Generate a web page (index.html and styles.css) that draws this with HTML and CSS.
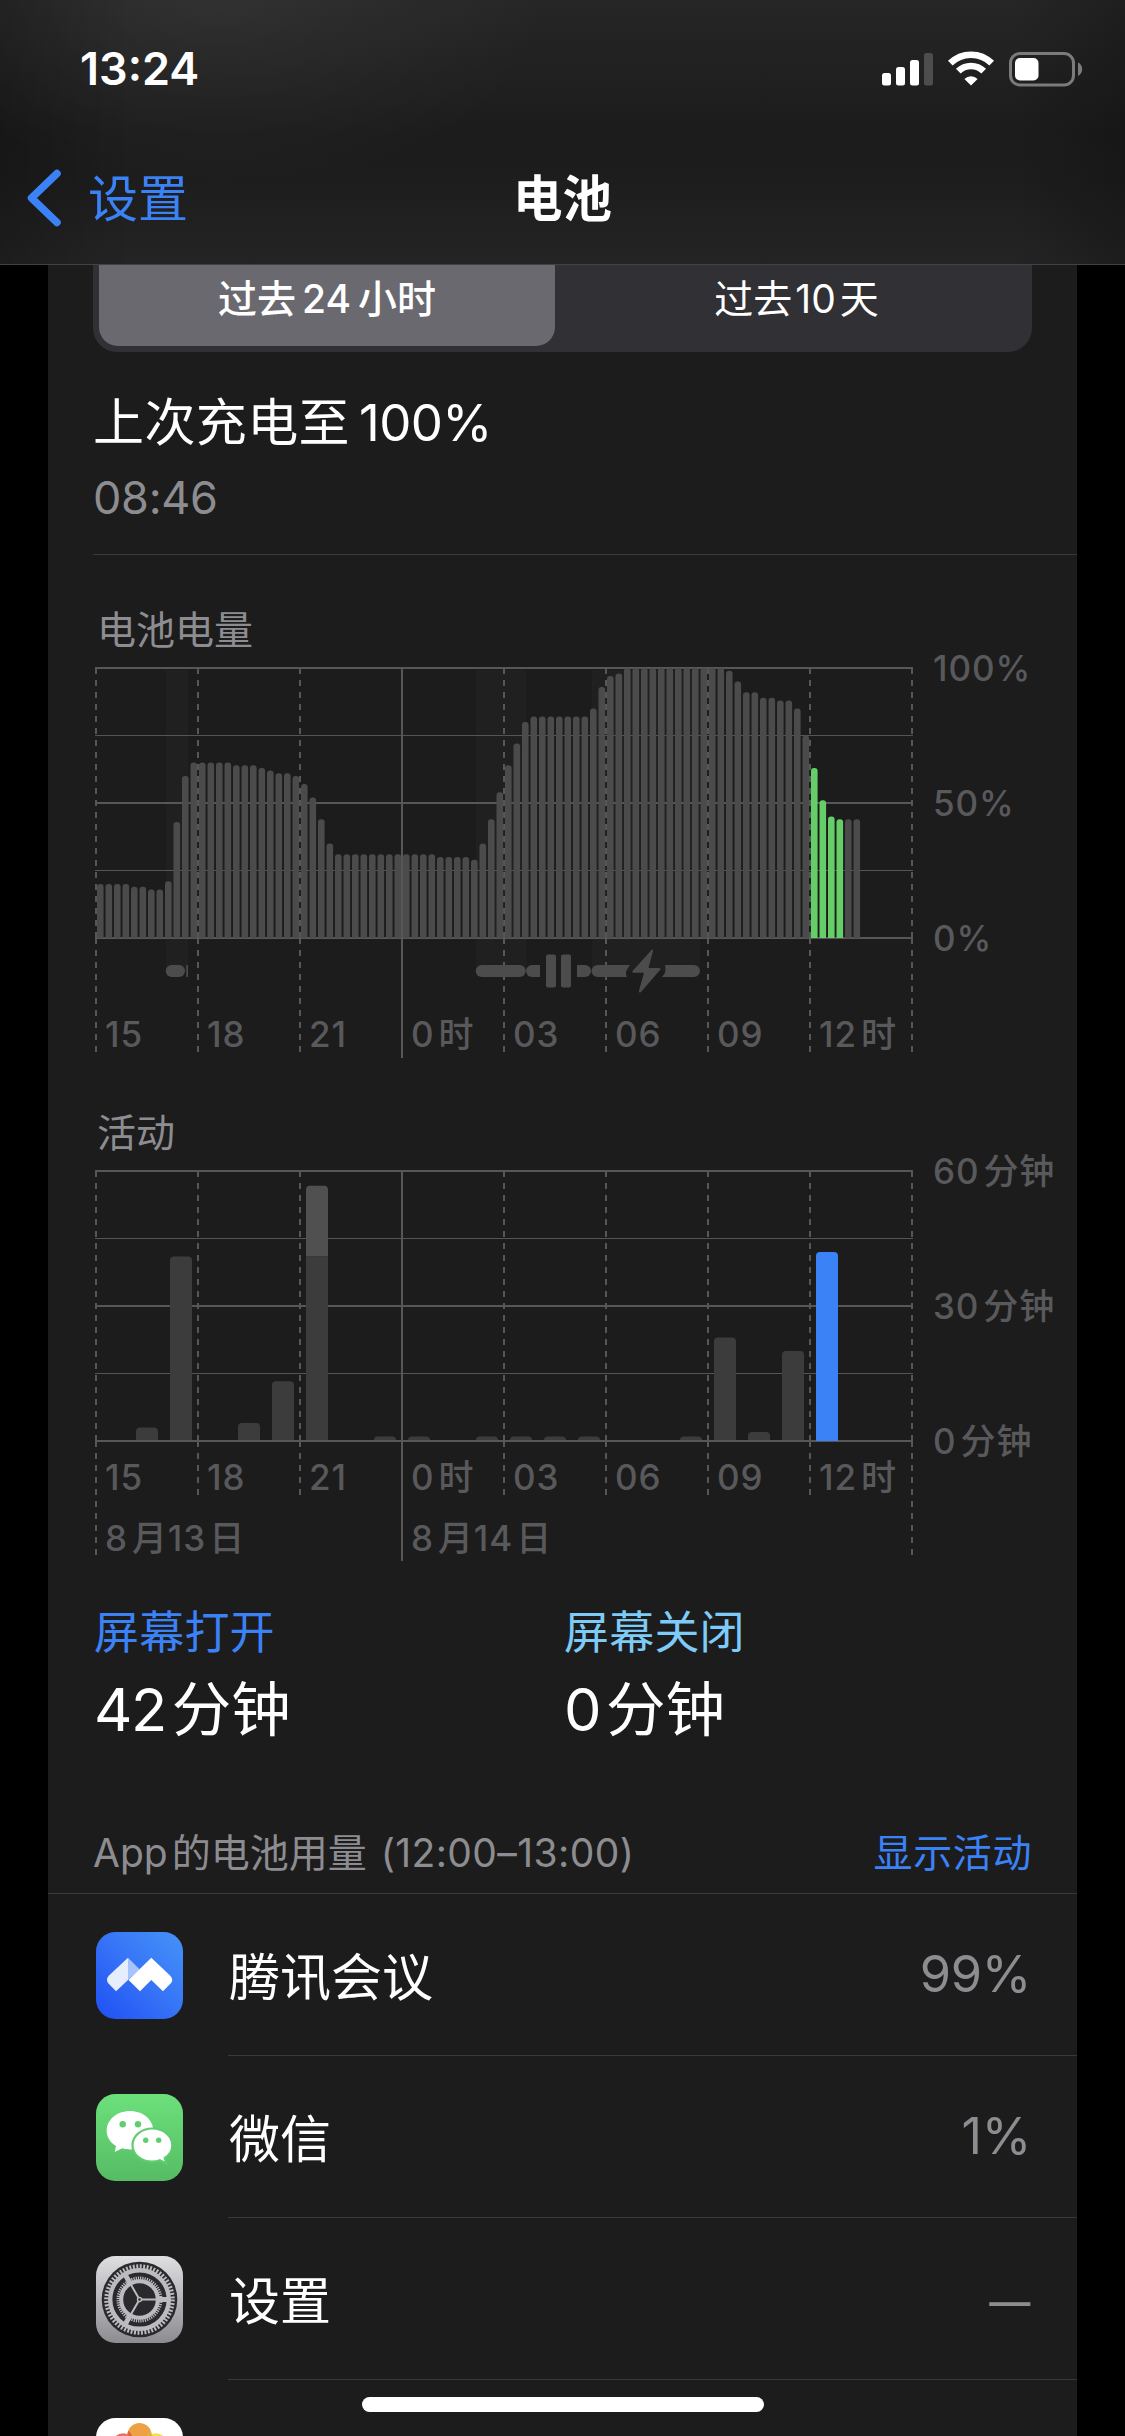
FILE: index.html
```html
<!DOCTYPE html>
<html lang="zh-CN">
<head>
    <meta charset="UTF-8">
    <title>电池</title>
    <link rel="stylesheet" href="styles.css">
</head>
<body>
<div class="screen">
    <header class="nav">
        <div class="status">
            <span class="time">13:24</span>
            <svg class="status_icons" viewBox="0 0 204 40" width="204" height="40">
                <g fill="#fff">
                    <rect x="2" y="23" width="9" height="12.5" rx="2.5"/>
                    <rect x="16" y="17" width="9" height="18.5" rx="2.5"/>
                    <rect x="30" y="10" width="9" height="25.5" rx="2.5"/>
                    <rect x="44" y="3" width="9" height="32.5" rx="2.5" fill="#4d4d4d"/>
                </g>
                <g fill="none" stroke="#fff" stroke-width="6.6">
                    <path d="M70.3 13.2a29.4 29.4 0 0 1 41.4 0"/>
                    <path d="M78.3 21.2a18 18 0 0 1 25.4 0"/>
                </g>
                <path d="M91 35.6l-6.6-6.7a9.4 9.4 0 0 1 13.2 0z" fill="#fff"/>
                <rect x="130.5" y="3.5" width="63" height="31.5" rx="9.5" fill="none" stroke="#7b7b7b" stroke-width="3"/>
                <rect x="135" y="8" width="23.5" height="22.5" rx="5" fill="#fff"/>
                <path d="M198 12.5c5.6 2.2 5.6 11 0 13.4z" fill="#7b7b7b"/>
            </svg>
        </div>
        <div class="title_bar">
            <a class="back">
                <svg viewBox="0 0 40 64" width="40" height="64"><path d="M33 7.500L7.500 32L33 56.500" fill="none" stroke="#3b82f7" stroke-width="7.500" stroke-linecap="round" stroke-linejoin="round"/></svg>
                <span>设置</span>
            </a>
            <h1>电池</h1>
            <span></span>
        </div>
    </header>

    <main class="panel">
        <div class="segment">
            <div class="seg seg_select">过去<span class="n">24</span>小时</div>
            <div class="seg">过去<span class="n">10</span>天</div>
        </div>

        <section class="charge">
            <div class="charge_title">上次充电至<span class="n">100%</span></div>
            <div class="charge_time">08:46</div>
        </section>

        <section class="charts">
            <h2 class="first">电池电量</h2>
            <svg id="level" class="chart" viewBox="48 655 1029 415" width="1029" height="415">
                <g class="shade">
                    <rect x="166" y="670" width="22" height="301"/>
                    <rect x="476" y="670" width="50" height="301"/>
                    <rect x="592" y="670" width="108" height="301"/>
                </g>
                <g class="grid"></g>
                <g class="bars"></g>
                <g class="charging">
                    <rect x="165.700" y="965" width="19.300" height="12" rx="6"/>
                    <rect x="186.300" y="965" width="1.700" height="12"/>
                    <rect x="475.700" y="965" width="50" height="12" rx="6"/>
                    <path d="M540 965v12h-8a6 6 0 0 1 0-12z"/>
                    <rect x="546" y="954.500" width="10" height="33" rx="2"/>
                    <rect x="561" y="954.500" width="10" height="33" rx="2"/>
                    <path d="M577 965v12h8a6 6 0 0 0 0-12z"/>
                    <path d="M630 965h-32.500a6 6 0 0 0 0 12H627q-3-5 3-12z"/>
                    <path d="M665 965h29a6 6 0 0 1 0 12h-32q5-5 3-12z"/>
                    <path d="M652 949.500L632.500 971q-1 1.500 1 1.800h10.500L639 990.500q-.5 3 2 1.500L660 970q1-1.800-1-2H648.500L653 951q0-2.500-1-1.500z"/>
                </g>
                <g class="axis">
                    <text x="933" y="681">100%</text>
                    <text x="933" y="816">50%</text>
                    <text x="933" y="951">0%</text>
                </g>
                <g class="axis hours"></g>
            </svg>

            <h2>活动</h2>
            <svg id="activity" class="chart" viewBox="48 1155 1029 420" width="1029" height="420">
                <g class="grid"></g>
                <g class="bars"></g>
                <g class="axis">
                    <text x="933" y="1184">60<tspan dx="4">分钟</tspan></text>
                    <text x="933" y="1319">30<tspan dx="4">分钟</tspan></text>
                    <text x="933" y="1454">0<tspan dx="4">分钟</tspan></text>
                    <text x="105" y="1551">8<tspan dx="4">月</tspan>13<tspan dx="3">日</tspan></text>
                    <text x="411" y="1551">8<tspan dx="4">月</tspan>14<tspan dx="3">日</tspan></text>
                </g>
                <g class="axis hours"></g>
            </svg>
        </section>

        <section class="totals">
            <div class="total on">
                <div class="label">屏幕打开</div>
                <div class="value"><span class="n">42</span>分钟</div>
            </div>
            <div class="total off">
                <div class="label">屏幕关闭</div>
                <div class="value"><span class="n">0</span>分钟</div>
            </div>
        </section>

        <div class="list_head">
            <span><span class="n">App</span>的电池用量 <span class="range">(12:00–13:00)</span></span>
            <a>显示活动</a>
        </div>

        <ul class="apps">
            <li>
                <svg class="icon" viewBox="0 0 87 87">
                    <defs>
                        <linearGradient id="meet" x1="0" y1="1" x2="1" y2="0"><stop offset="0" stop-color="#1f4ff5"/><stop offset=".5" stop-color="#3673f6"/><stop offset="1" stop-color="#4593f8"/></linearGradient>
                    </defs>
                    <rect width="87" height="87" rx="19.500" fill="url(#meet)"/>
                    <path d="M32 25.700L13 43.500Q9.500 47 12 51L20 59.300L32 48z" fill="#e6eefe"/>
                    <path d="M32 25.700L43.800 37.500L32 48z" fill="#a6c3fb"/>
                    <path d="M55.300 25.700L74 43.500Q77.500 47 75.500 50.500L67 59.300L55.300 48L44 59.300L32.500 48z" fill="#fff"/>
                </svg>
                <div class="row"><span>腾讯会议</span><em>99%</em></div>
            </li>
            <li>
                <svg class="icon" viewBox="0 0 87 87">
                    <defs>
                        <linearGradient id="wechat" x1="0" y1="0" x2="0" y2="1"><stop offset="0" stop-color="#6ce07b"/><stop offset="1" stop-color="#56bc65"/></linearGradient>
                    </defs>
                    <rect width="87" height="87" rx="19.500" fill="url(#wechat)"/>
                    <path d="M34 17C21 17 10.700 25.700 10.700 36.700c0 6.300 3.300 11.500 9.300 15.300L18.700 58l7.600-3.800c2.700.8 5 1.300 9.500 1.200C48 55 57.300 47 57.300 36.700 57.300 25.700 47 17 34 17z" fill="#fff"/>
                    <path d="M56.300 34.500c-11 0-19.800 7.400-19.800 16.700s8.800 16.500 19.800 16.500c3 0 5.200-.5 7.500-1.400l6.400 3.200-1.500-5.500c5-3.200 7.600-7.600 7.600-12.800 0-9.300-9-16.700-20-16.700z" fill="#fff" stroke="#61cd70" stroke-width="2.200"/>
                    <g fill="#61cd70"><circle cx="26.700" cy="30.200" r="3.200"/><circle cx="42" cy="30.200" r="3.200"/><circle cx="49.700" cy="46.200" r="2.700"/><circle cx="62.700" cy="46.200" r="2.700"/></g>
                </svg>
                <div class="row"><span>微信</span><em>1%</em></div>
            </li>
            <li>
                <svg class="icon" viewBox="0 0 87 87">
                    <defs>
                        <linearGradient id="gear" x1="0" y1="0" x2="0" y2="1"><stop offset="0" stop-color="#dfdfe2"/><stop offset="1" stop-color="#8c8c91"/></linearGradient>
                    </defs>
                    <rect width="87" height="87" rx="19.500" fill="url(#gear)"/>
                    <g transform="translate(43.500 43.500)" fill="none" stroke="#bcbcc0">
                        <circle r="37.800" fill="#2a2a2d" stroke="none"/>
                        <circle r="33" stroke-width="4.500" stroke-dasharray="1.900 1.556"/>
                        <circle r="29.300" stroke-width="4.400"/>
                        <circle r="21.300" stroke-width="3.400" stroke-dasharray="1.200 1.030"/>
                        <circle r="18.300" stroke-width="4"/>
                        <g id="spokes">
                            <path d="M2 0H28" stroke-width="2"/>
                            <path d="M18 0H28" stroke-width="5"/>
                            <path d="M2 0H28" stroke-width="2" transform="rotate(120)"/>
                            <path d="M18 0H28" stroke-width="5" transform="rotate(120)"/>
                            <path d="M2 0H28" stroke-width="2" transform="rotate(240)"/>
                            <path d="M18 0H28" stroke-width="5" transform="rotate(240)"/>
                        </g>
                        <circle r="2" stroke-width="1.400"/>
                    </g>
                </svg>
                <div class="row"><span>设置</span><em class="none">—</em></div>
            </li>
            <li class="cut">
                <svg class="icon" viewBox="0 0 87 87">
                    <rect width="87" height="87" rx="19.500" fill="#fff"/>
                    <g transform="translate(43.500 43.500)">
                        <rect x="-12" y="-35" width="24" height="33" rx="12" fill="#e9706a" transform="rotate(-45)"/>
                        <rect x="-12" y="-35" width="24" height="33" rx="12" fill="#f4e04b" transform="rotate(45)"/>
                        <rect x="-12" y="-38.500" width="24" height="36" rx="12" fill="#eda144"/>
                        <path d="M-12-26.500a12 12 0 0 1 .8-4.500q4 3 5 9.500h-5.800z" fill="#dd6a3c"/>
                        <path d="M12-26.500a12 12 0 0 0-.8-4.500q-4 3-5 9.500h5.800z" fill="#e2b13d"/>
                    </g>
                </svg>
            </li>
        </ul>
    </main>
    <div class="home"></div>
</div>
<script src="script.js"></script>
</body>
</html>
```
FILE: styles.css
```css
*{
    margin: 0;
    padding: 0;
    box-sizing: border-box;
}
body{
    background-color: #000;
    color: #fff;
    font-family: Inter, "Noto Sans CJK SC", sans-serif;
}
.screen{
    position: relative;
    width: 1125px;
    height: 2436px;
    overflow: hidden;
}

/* 顶部导航 */
.nav{
    height: 265px;
    border-bottom: 1px solid #424244;
    background: radial-gradient(ellipse 330px 190px at 220px 0, rgba(255,255,255,.05), transparent),
                linear-gradient(90deg, rgba(0,0,0,.2), transparent 12%, transparent 90%, rgba(0,0,0,.2)),
                linear-gradient(#262626, #1c1c1c 50%, #1d1d1d 68%, #242424);
}
.status{
    display: flex;
    justify-content: space-between;
    height: 135px;
    padding: 42px 41px 0 80px;
}
.time{
    font-size: 45px;
    font-weight: 600;
    line-height: 54px;
}
.status_icons{
    margin-top: 8px;
}
.title_bar{
    display: grid;
    grid-template-columns: 1fr auto 1fr;
    align-items: center;
    height: 128px;
    padding: 0 24px;
}
.back{
    display: flex;
    align-items: center;
    color: #3b82f7;
    font-size: 50px;
    line-height: 60px;
}
.back svg{
    margin-top: -2px;
}
.back span{
    margin-left: 24px;
}
.title_bar h1{
    font-size: 49.5px;
    font-weight: 600;
    line-height: 60px;
}

/* 主面板 */
.panel{
    width: 1029px;
    height: 2171px;
    margin: 0 auto;
    background-color: #1c1c1c;
}
.segment{
    display: flex;
    width: 939px;
    height: 87px;
    margin-left: 45px;
    padding: 0 6px 6px;
    border-radius: 0 0 24px 24px;
    background-color: #313035;
}
.seg{
    flex: 1;
    padding: 7px 0 0 12px;
    font-size: 39px;
    line-height: 54px;
    text-align: center;
}
.seg_select{
    flex: 0 0 456px;
    padding-left: 0;
    border-radius: 0 0 19px 19px;
    background-color: #6a696f;
    font-weight: 500;
}
.seg .n{
    margin: 0 4px 0 3px;
}
.seg_select .n{
    margin: 0 7px 0 6px;
}

.charge{
    height: 203px;
    margin-left: 45px;
    padding-top: 41px;
    border-bottom: 1px solid #39393b;
}
.charge_title{
    font-size: 51px;
    line-height: 60px;
    letter-spacing: .4px;
}
.charge_title .n{
    margin-left: 9px;
    letter-spacing: -.6px;
}
.charge_time{
    margin-top: 18px;
    color: #8d8d91;
    font-size: 45px;
    line-height: 54px;
    letter-spacing: -.3px;
}

/* 图表 */
.charts h2{
    height: 44px;
    margin: 41px 0 0 49px;
    color: #8d8d91;
    font-size: 39px;
    font-weight: 400;
    line-height: 44px;
}
.charts .first{
    margin-top: 53px;
}
.chart{
    display: block;
    overflow: visible;
}
.first + .chart{
    margin-top: 3px;
}
.grid line{
    stroke: #575757;
    stroke-width: 2;
}
.grid .thin{
    stroke: #555;
    stroke-width: 1.2;
}
.grid .dash{
    stroke-dasharray: 6 6;
}
.shade{
    fill: #202020;
}
.charging{
    fill: #4c4c4c;
}
#level .bars{
    fill: #4b4b4b;
}
#activity .bars{
    fill: #3c3c3c;
}
#level .bars .now{
    fill: #65ce68;
}
#activity .bars .now{
    fill: #3b82f7;
}
#activity .bars .light{
    fill: #505050;
}
.axis{
    fill: #59595c;
    font-size: 35px;
    font-weight: 500;
    letter-spacing: .9px;
}

/* 屏幕时间 */
.totals{
    display: flex;
    padding: 31px 0 0 46px;
}
.total{
    width: 470px;
}
.label{
    font-size: 45px;
    line-height: 54px;
    letter-spacing: .2px;
}
.on .label{
    color: #3b82f7;
}
.off .label{
    color: #7fcbf8;
}
.value{
    margin-top: 14px;
    font-size: 59.5px;
    line-height: 70px;
}
.value .n{
    margin-right: 6px;
    letter-spacing: -1.5px;
}

/* 应用列表 */
.list_head{
    display: flex;
    justify-content: space-between;
    height: 150px;
    padding: 85px 45px 0;
    border-bottom: 1px solid #39393b;
    color: #8d8d91;
    font-size: 39px;
    line-height: 48px;
}
.list_head .n{
    margin-right: 4px;
}
.list_head .range{
    margin-left: 3px;
    letter-spacing: .4px;
}
.list_head a{
    color: #3b82f7;
    letter-spacing: .6px;
}
.apps{
    list-style-type: none;
}
.apps>li{
    display: flex;
    align-items: center;
    height: 162px;
    padding-left: 48px;
}
.icon{
    width: 87px;
    height: 87px;
    margin-right: 45px;
}
.row{
    display: flex;
    flex: 1;
    align-items: center;
    justify-content: space-between;
    height: 162px;
    padding: 0 46px 2px 1px;
    border-bottom: 1px solid #39393b;
    font-size: 51px;
}
.row em{
    color: #8d8d91;
    font-size: 50.5px;
    font-style: normal;
    letter-spacing: -.3px;
}
.row .none{
    padding: 9px 1px 0 0;
    font-size: 41px;
    font-weight: 500;
}
.home{
    position: absolute;
    left: 362px;
    bottom: 24px;
    width: 402px;
    height: 15px;
    border-radius: 8px;
    background-color: #fff;
}
```
FILE: script.js
```js
var NS = "http://www.w3.org/2000/svg";

function add(parent, tag, attrs, text) {
    var el = document.createElementNS(NS, tag);
    for (var k in attrs) {
        el.setAttribute(k, attrs[k]);
    }
    if (text) el.textContent = text;
    parent.appendChild(el);
    return el;
}

// 网格: top/bottom是图表上下边, ends是每条竖线的终点
function grid(id, top, bottom, ends) {
    var g = document.querySelector(id + " .grid");
    for (var i = 0; i <= 4; i++) {
        var y = top + (bottom - top) / 4 * i;
        add(g, "line", {x1: 95, x2: 913, y1: y, y2: y, "class": i % 2 ? "thin" : ""});
    }
    for (var j = 0; j < ends.length; j++) {
        var x = 96 + 102 * j;
        var cls = j == 3 ? "" : "dash";
        add(g, "line", {x1: x, x2: x, y1: top, y2: bottom, "class": cls});
        add(g, "line", {x1: x, x2: x, y1: bottom, y2: ends[j], "class": cls});
    }
}

function hours(id, y) {
    var g = document.querySelector(id + " .hours");
    ["15", "18", "21", "0", "03", "06", "09", "12"].forEach(function (h, i) {
        var t = add(g, "text", {x: 105 + 102 * i, y: y}, h);
        if (h == "0" || h == "12") {
            add(t, "tspan", {dx: 4}, "时");
        }
    });
}

// 上边圆角的柱子
function bar(g, x, y, w, bottom, r, cls) {
    r = Math.min(r, bottom - y);
    add(g, "path", {
        d: "M" + x + " " + bottom + "V" + (y + r) + "q0 " + -r + " " + r + " " + -r + "h" + (w - 2 * r) + "q" + r + " 0 " + r + " " + r + "V" + bottom + "z",
        "class": cls || ""
    });
}

// [电量, 个数]
var level = [[20, 4], [19, 2], [18, 2], [21, 1], [43, 1], [60, 1], [65, 5], [64, 3], [63, 1], [62, 1],
    [61, 2], [60, 1], [57, 1], [52, 1], [44, 1], [35, 1], [31, 12], [30, 4], [29, 1], [35, 1],
    [44, 1], [54, 1], [64, 1], [72, 1], [80, 1], [82, 7], [85, 1], [93, 1], [97, 1], [98, 1],
    [100, 12], [99, 1], [95, 1], [91, 2], [89, 2], [88, 2], [85, 1], [75, 1], [63, 1], [51, 1],
    [45, 1], [44, 3]];
var activity = [0, 3, 41, 0, 4, 13.3, 41, 0, 1, 1, 0, 1, 1, 1, 1, 0, 0, 1, 23, 2, 20, 42];

grid("#level", 668, 938, [1052, 1052, 1052, 1058, 1052, 1052, 1052, 1052, 1052]);
grid("#activity", 1171, 1441, [1555, 1495, 1495, 1561, 1495, 1495, 1495, 1495, 1555]);
hours("#level", 1047);
hours("#activity", 1490);

var n = 0;
var lg = document.querySelector("#level .bars");
level.forEach(function (v) {
    for (var i = 0; i < v[1]; i++) {
        bar(lg, 97 + 8.5 * n, 938 - v[0] * 2.7, 6.6, 938, 3, n >= 84 && n < 88 ? "now" : "");
        n++;
    }
});

var ag = document.querySelector("#activity .bars");
activity.forEach(function (v, i) {
    if (!v) return;
    var x = 102 + 34 * i;
    if (i == 6) {
        bar(ag, x, 1441 - 56.7 * 4.5, 22, 1441 - v * 4.5, 4, "light");
        bar(ag, x, 1441 - v * 4.5, 22, 1440, 0);
    } else {
        bar(ag, x, 1441 - v * 4.5, 22, i == 21 ? 1441 : 1440, 4, i == 21 ? "now" : "");
    }
});
```
